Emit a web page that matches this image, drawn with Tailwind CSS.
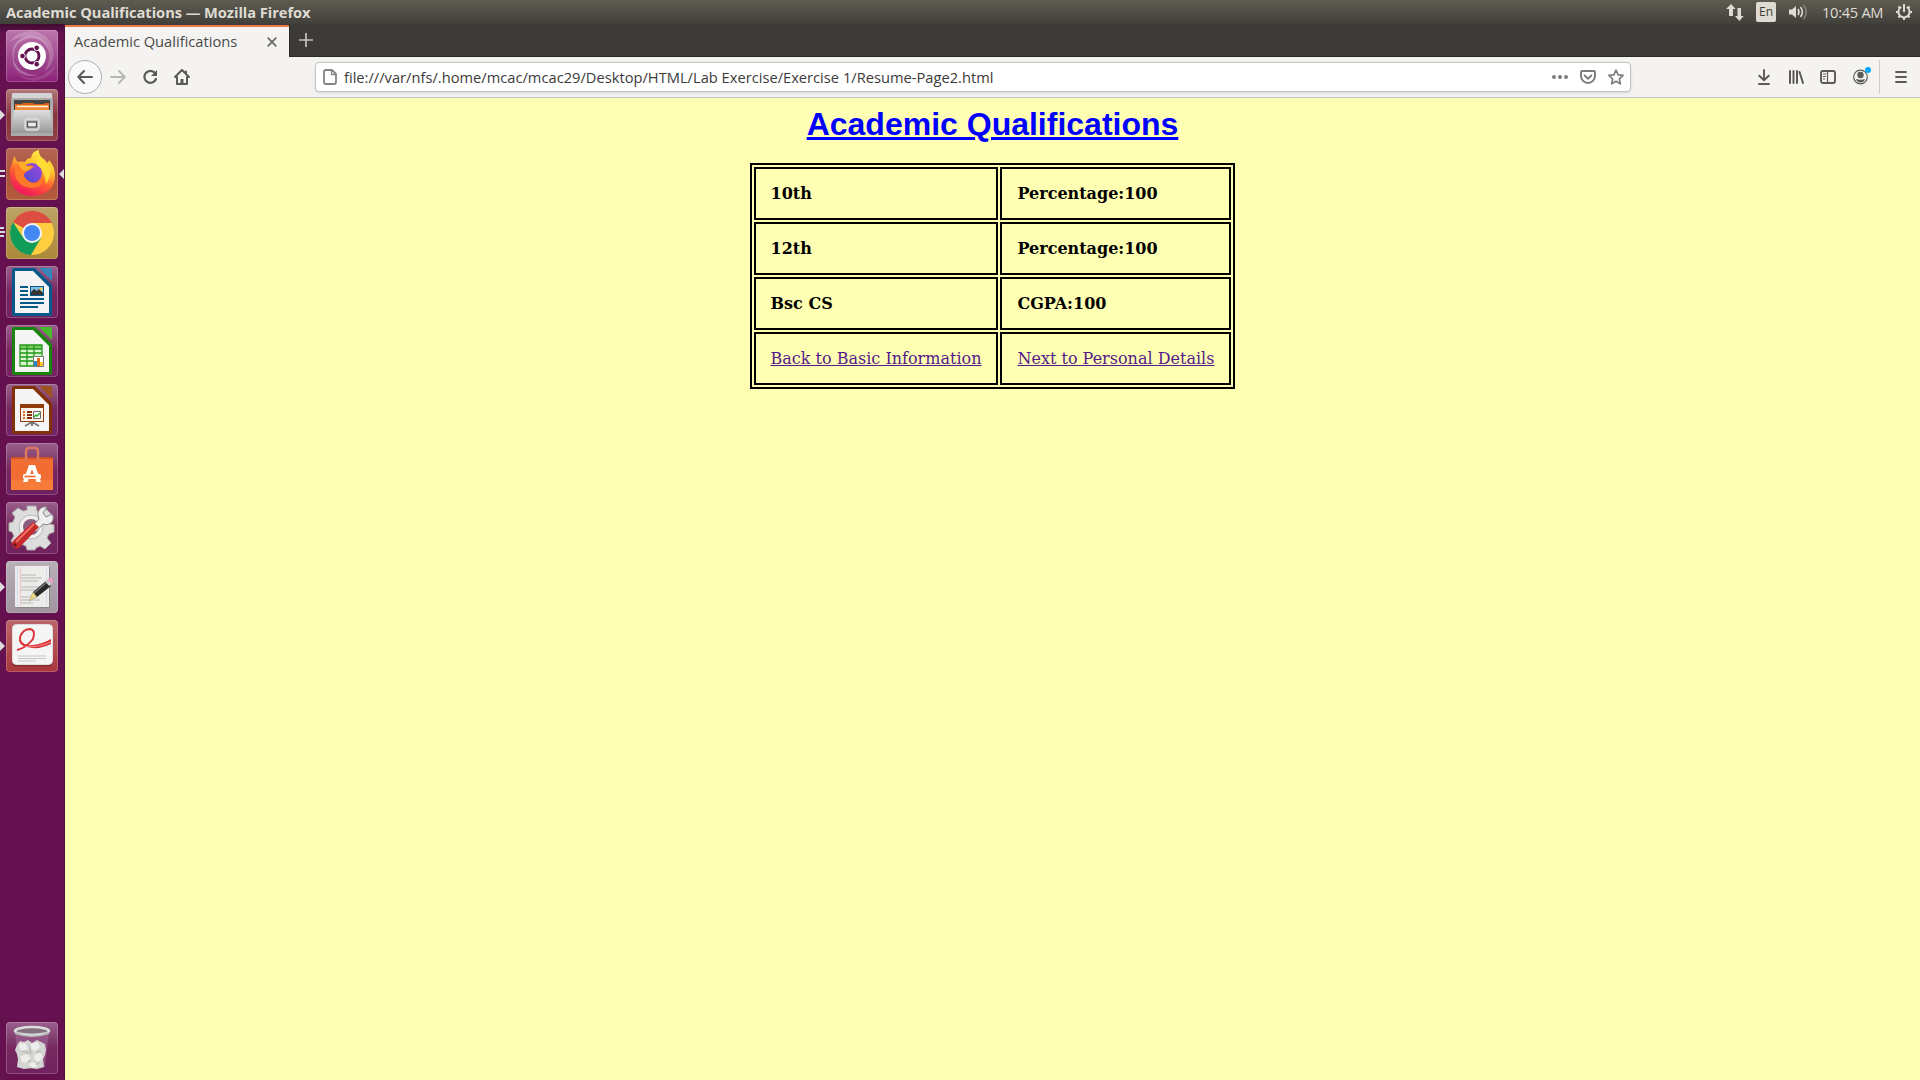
<!DOCTYPE html>
<html lang="en">
<head>
<meta charset="utf-8">
<title>Academic Qualifications</title>
<script src="https://cdn.jsdelivr.net/npm/@tailwindcss/browser@4"></script>
</head>
<body class="w-[1920px] h-[1080px] overflow-hidden flex flex-col bg-[#ffffb3] font-['Open_Sans','Noto_Sans',sans-serif]">

<!-- System panel -->
<header class="h-6 shrink-0 flex items-center justify-between pl-1.5 pr-[7px] bg-linear-to-b from-[#5e5b50] via-[#504e47] to-[#403f3a] text-[#dfdbd2]">
  <span class="text-[14.67px] leading-6 font-bold whitespace-nowrap pb-px tracking-[-0.05px]">Academic Qualifications — Mozilla Firefox</span>
  <div class="flex items-center h-6">
    <svg class="w-[18px] h-[18px] mr-3 mt-0.5" viewBox="0 0 18 18" fill="#dfdbd2"><path d="M5 0 9.600 5H7v7H3V5H0zM13.300 17 9 12h2.500V4h3.500v8h2.700z"/></svg>
    <span class="w-5 h-5 rounded-[2px] bg-[#dfdbd2] text-[#3c3b37] text-[12px] leading-5 text-center">En</span>
    <svg class="w-5 h-[18px] ml-3 mr-[14px]" viewBox="0 0 20 18" fill="none" stroke-width="1.600"><path d="M1 6.500h3L8 3v12l-4-3.500H1z" fill="#dfdbd2"/><path d="M10 6q2 3 0 6M12.500 4q3.700 5 0 10" stroke="#dfdbd2"/><path d="M15.500 2q5.500 7 0 14" stroke="#85827a"/></svg>
    <span class="w-[61px] text-[14.67px] leading-6 whitespace-nowrap pb-px tracking-[-0.3px]">10:45 AM</span>
    <svg class="w-[18px] h-[18px] ml-3" viewBox="0 0 18 18" fill="none" stroke="#dfdbd2"><path d="M6.200 4A5.600 5.600 0 1 0 11.800 4" stroke-width="2"/><path d="M9 1v8" stroke-width="2"/><path d="M3.500 3.500l1.800 1.800M14.500 3.500l-1.800 1.800M1 9h2.500M14.500 9H17M3.500 14.500l1.800-1.800M14.500 14.500l-1.800-1.800M9 14.500V17" stroke-width="2.200"/></svg>
  </div>
</header>

<div class="flex flex-1 min-h-0">
<!-- Launcher -->
<nav class="w-[65px] shrink-0 flex flex-col gap-[7px] pl-1.5 pt-1.5 pb-1.5 bg-[#65104f] border-r border-[#4b0b3b] bg-linear-to-b from-[#410b32] from-0% to-[#65104f] to-[10px]">
  <div class="relative size-[52px] rounded bg-linear-to-b from-[#ba76ac] to-[#8b1f78] ring-1 ring-inset ring-white/20">
    <svg viewBox="0 0 52 52" class="size-[52px]"><path d="M3 12Q27-1 39 14Q48 27 38 42Q50 33 47 19Q43 3 26 1Q12 1 3 12" fill="#fff" opacity=".2"/><path d="M8 31Q5 11 25 8Q37 8 43 20Q37 4 20 6Q2 12 8 36Q15 49 32 45Q14 45 8 31" fill="#fff" opacity=".28"/><path d="M9 40Q26 58 49 36Q45 49 28 51Q15 50 9 40" fill="#fff" opacity=".12"/><circle cx="26.200" cy="26.800" r="14" fill="#5f114d" opacity=".4"/><circle cx="26" cy="26" r="14" fill="#fff"/><circle cx="26" cy="26" r="7" fill="none" stroke="#63104f" stroke-width="2.800"/><g fill="#63104f" stroke="#fff"><circle cx="16.500" cy="26" r="2.800"/><circle cx="30.700" cy="17.800" r="2.800"/><circle cx="30.700" cy="34.200" r="2.800"/></g></svg>
  </div>
  <div class="relative size-[52px] rounded bg-linear-to-b from-[#b47a7b] via-[#873541] to-[#914147] ring-1 ring-inset ring-white/20">
    <svg viewBox="0 0 52 52" class="size-[52px]"><defs><linearGradient id="metal" x2="0" y2="1"><stop stop-color="#dedede"/><stop offset="1" stop-color="#999"/></linearGradient></defs><path d="M6 5q0-1 2-1h36q2 0 2 1l1 16H5z" fill="#d4d4d4"/><path d="M5 9h42v38H5z" fill="#aaa"/><path d="M8 11h36v12H8z" fill="#444"/><path d="M9 15h7l1-1h10l1 1h10l1-1h4v8H9z" fill="#d56218"/><path d="M9 16h34v5H9z" fill="#f18a38"/><path d="M11 17.500h31" stroke="#fff0d9" stroke-width="1.500"/><path d="M7 21h38l2 23H5z" fill="url(#metal)"/><path d="M5 19l3 2-3 20zM47 19l-3 2 3 20z" fill="#b7b7b7"/><rect x="19" y="30" width="14" height="11" rx="2" fill="#bcbcbc" stroke="#eee"/><rect x="21.500" y="33" width="9" height="5" fill="#eee" stroke="#555" stroke-width="1.300"/></svg>
    <i class="absolute -left-1.5 top-[21px] border-y-[5px] border-y-transparent border-l-[5px] border-l-[#ddd]"></i>
  </div>
  <div class="relative size-[52px] rounded bg-linear-to-b from-[#b46755] via-[#ad503a] to-[#b45b3c] ring-1 ring-inset ring-white/20">
    <svg viewBox="0 0 52 52" class="size-[52px]"><defs><linearGradient id="fox" x1=".8" y1="0" x2=".35" y2="1"><stop stop-color="#fff34f"/><stop offset=".35" stop-color="#ffc52c"/><stop offset=".65" stop-color="#ff5a32"/><stop offset="1" stop-color="#f0135f"/></linearGradient><linearGradient id="orb" x1="1" y1="0" x2="0" y2="1"><stop stop-color="#a045db"/><stop offset="1" stop-color="#4a4ed0"/></linearGradient></defs><path d="M9 8Q9 12 12 14Q16 13 19 14Q21 10 25 10Q26 3 33 2Q32 8 39 12L41 15Q43 14 43 12Q49 19 49 27Q49 46 27 48Q5 47 4 27Q3 20 6 16Q6 12 9 8" fill="url(#fox)"/><circle cx="26" cy="25" r="10" fill="url(#orb)"/><path d="M9 17Q16 13 21 18Q26 16 28 19L22 23Q18 24 18 28Q20 33 27 35Q34 36 38 29Q37 40 26 40Q12 39 9 27z" fill="#ff7a28"/><path d="M12 14q5-1 8 4l6 1q-3 4-8 4-5-4-6-9" fill="#ffae2a"/><path d="M33 2q-1 6 6 11 10 10 1 23-1-14-9-19-2-7 2-15" fill="#ffdb36"/></svg>
    <i class="absolute -left-1.5 top-[22px] w-[5px] h-[7px] border-y-2 border-[#ddd]"></i>
    <i class="absolute left-[53px] top-[21px] border-y-[5px] border-y-transparent border-r-[5px] border-r-[#ddd]"></i>
  </div>
  <div class="relative size-[52px] rounded bg-linear-to-b from-[#bda366] to-[#ac8938] ring-1 ring-inset ring-white/20">
    <svg viewBox="0 0 52 52" class="size-[52px]"><circle cx="26" cy="26" r="22" fill="#ffcd40"/><path d="M26 26 7 15A22 22 0 0 1 46 16H26z" fill="#dc4d42"/><path d="M7 15A22 22 0 0 0 25 48L35 31 26 26 16 29z" fill="#119d59"/><circle cx="26" cy="26" r="10" fill="#f4f4f4"/><circle cx="26" cy="26" r="8" fill="#4387f5"/></svg>
    <i class="absolute -left-1.5 top-5 w-1 h-0.5 bg-[#ddd]"></i><i class="absolute -left-1.5 top-6 w-[5px] h-0.5 bg-[#ddd]"></i><i class="absolute -left-1.5 top-7 w-1 h-0.5 bg-[#ddd]"></i>
  </div>
  <div class="size-[52px] rounded bg-linear-to-b from-[#99608b] via-[#76285f] to-[#702260] ring-1 ring-inset ring-white/20">
    <svg viewBox="0 0 52 52" class="size-[52px]"><path d="M6 4q0-2 2-2h21l17 17v29q0 2-2 2H8q-2 0-2-2z" fill="#07588b"/><path d="M33 2h11q2 0 2 2v11z" fill="#3886b9"/><path d="M9 5h18l16 16v26H9z" fill="#f4f4f4"/><path d="M14 21h8M14 25h8M14 29h8M14 33h24M14 37h24M14 41h18" stroke="#07588b" stroke-width="2"/><path d="M24 20h14v10H24z" fill="#07588b"/><path d="M25 21h12v8H25z" fill="#82bde3"/><path d="M25 29v-3l3-3 3 2 2-2 4 4v2z" fill="#333"/><circle cx="35" cy="23" r="1.500" fill="#ffcf41"/></svg>
  </div>
  <div class="size-[52px] rounded bg-linear-to-b from-[#99608b] via-[#76285f] to-[#702260] ring-1 ring-inset ring-white/20">
    <svg viewBox="0 0 52 52" class="size-[52px]"><path d="M6 4q0-2 2-2h21l17 17v29q0 2-2 2H8q-2 0-2-2z" fill="#18840d"/><path d="M33 2h11q2 0 2 2v11z" fill="#48b92e"/><path d="M9 5h18l16 16v26H9z" fill="#f5f5f5"/><path d="M14 20h22v21H14z" fill="#d8f6d0"/><path d="M14 20h22v4H14z" fill="#76cb5d"/><path d="M14 20h22v21H14zM14 24h22M14 28h22M14 32h22M14 36h22M21 20v21M28 20v21" fill="none" stroke="#239619" stroke-width="1.300"/><path d="M27.500 31.500h10v10h-10z" fill="#fff" stroke="#777"/><path d="M28 36h3v5h-3z" fill="#238ccd"/><path d="M31 33h3v8h-3z" fill="#e36913"/><path d="M34 37h3v4h-3z" fill="#ffc52b"/></svg>
  </div>
  <div class="size-[52px] rounded bg-linear-to-b from-[#99608b] via-[#76285f] to-[#702260] ring-1 ring-inset ring-white/20">
    <svg viewBox="0 0 52 52" class="size-[52px]"><path d="M6 4q0-2 2-2h21l17 17v29q0 2-2 2H8q-2 0-2-2z" fill="#823006"/><path d="M33 2h11q2 0 2 2v11z" fill="#9c5221"/><path d="M9 5h18l16 16v26H9z" fill="#f5f5f5"/><path d="M26 38 19 42M26 38l7 4M26 37v5" stroke="#777" stroke-width="2"/><rect x="14.500" y="20.500" width="23" height="17" fill="#fff4ea" stroke="#943b0b"/><path d="M14 20h24v4H14z" fill="#943b0b"/><path d="M17 28h2m-2 3h2m-2 3h2" stroke="#e36b28" stroke-width="2"/><path d="M21 28h5m-5 3h5m-5 3h5" stroke="#823006" stroke-width="2"/><path d="M27.500 27.500h7v7h-7z" fill="#fff" stroke="#666"/><path d="m28 33 2-2 1 1 3-3" fill="none" stroke="#27ae32" stroke-width="1.500"/></svg>
  </div>
  <div class="size-[52px] rounded bg-linear-to-b from-[#99608b] via-[#76285f] to-[#702260] ring-1 ring-inset ring-white/20">
    <svg viewBox="0 0 52 52" class="size-[52px]"><path d="M5 14h42v33H5z" fill="#f26d32"/><path d="M5 37h42v10H5z" fill="#f77b39"/><path d="M5 14h42v2H5z" fill="#cf5428"/><path d="M20 18V9q0-4 3-4h6q3 0 3 4v9" fill="none" stroke="#d9785d" stroke-width="2.500"/><path fill-rule="evenodd" d="m23 22-6 17h4.500l4.500-13 4.500 13H35l-6-17z" fill="#fff"/><rect x="17" y="31" width="18" height="5" rx="1.500" fill="#fff"/><path d="M18.500 33.500h11" stroke="#f26d32" stroke-width="1.800"/></svg>
  </div>
  <div class="size-[52px] rounded bg-linear-to-b from-[#99608b] via-[#76285f] to-[#702260] ring-1 ring-inset ring-white/20">
    <svg viewBox="0 0 52 52" class="size-[52px]"><path d="m21 4 9 0 1 5 4 2 5-4 6 6-4 5 2 4 4 1v7l-5 2-2 4 4 5-6 6-5-3-4 2-1 2h-8l-1-4-5-2-5 3-5-6 3-5-2-4-3-1v-8l4-1 2-5-3-4 6-5 5 3 4-1z" fill="#ddd" stroke="#aaa"/><circle cx="25" cy="25" r="12" fill="#efefef" stroke="#b6b6b6"/><circle cx="25" cy="25" r="8" fill="#8c5c7e"/><path d="m26 25 7-8q-3-7 2-11 3-2 6-1l-4 6 3 4 6-3q3 5-1 9-4 3-8 1l-7 8z" fill="#eee" stroke="#888"/><path d="m27 20 6 5-20 21q-5 2-7-3-1-2 2-5z" fill="#c52b2b"/><path d="M28 22 10 40" stroke="#ed7066" stroke-width="2"/><circle cx="9" cy="43" r="1.800" fill="#6c1822"/></svg>
  </div>
  <div class="relative size-[52px] rounded bg-linear-to-b from-[#b9afb7] to-[#a094a0] ring-1 ring-inset ring-white/20">
    <svg viewBox="0 0 52 52" class="size-[52px]"><path d="M9 6h35v41H9z" fill="#888"/><path d="M9 5h34v41H9z" fill="#ececea"/><path d="M15 14h15M15 17h21M15 20h17M15 26h19M15 29h17M15 36h16M15 39h19M15 42h12" stroke="#b5b5b5" stroke-width="1.200"/><path d="M14.500 6v39" stroke="#f3c4c4"/><path d="M11.500 6v39M40.500 6v39" stroke="#d3deea"/><path d="m27 31 13-11 5 5-14 11-8 4z" fill="#292929"/><path d="m27 31 4 5-8 4z" fill="#e8d984"/><path d="m28 32 13-11" stroke="#777" stroke-width="1.500"/><path d="m39 20 3-2 4 5-3 2z" fill="#ccc"/><path d="m41.500 18.500q2-3 4.500-1t0 5z" fill="#e9a0c6"/></svg>
    <i class="absolute -left-1.5 top-[21px] border-y-[5px] border-y-transparent border-l-[5px] border-l-[#ddd]"></i>
  </div>
  <div class="relative size-[52px] rounded bg-linear-to-b from-[#ba6569] to-[#a9353b] ring-1 ring-inset ring-white/20">
    <svg viewBox="0 0 52 52" class="size-[52px]"><rect x="6.500" y="5.500" width="40" height="41" rx="4" fill="#6d2028" opacity=".6"/><rect x="6.500" y="4.500" width="40" height="40" rx="4" fill="#f5f5f5" stroke="#ddd"/><path d="M11 30Q20 28 27 19Q30 10 24 9Q17 9 14 17Q13 25 21 26" fill="none" stroke="#db353a" stroke-width="2"/><path d="M15 21Q18 26 27 25Q36 24 45 19V24Q35 29 26 28Q18 27 15 21" fill="#da3438"/><path d="M19 26.500Q31 28 45 22" fill="none" stroke="#f28d8d"/><path d="M12 36h28M12 38.500h28M12 41h18" stroke="#c5c5c5" stroke-width="1.200"/></svg>
    <i class="absolute -left-1.5 top-[21px] border-y-[5px] border-y-transparent border-l-[5px] border-l-[#ddd]"></i>
  </div>
  <div class="mt-auto size-[52px] rounded bg-linear-to-b from-[#97608b] via-[#76285f] to-[#702260] ring-1 ring-inset ring-white/20">
    <svg viewBox="0 0 52 52" class="size-[52px]"><path d="M9 10h34l-4 35q-13 4-26 0z" fill="#a875a1" opacity=".45"/><path d="m11 23 3-4 4 1 4-2 4 3 5-3 4 2 4 2 1 6-1 5-2 4 1 8-7 2-6-1-7 1-7-2 1-8-1-5-2-4z" fill="#d4d4d2"/><g fill="#ededeb"><path d="m14 21 6 1 2 5-6 2-3-4zM25 22l6-2 3 5-5 4-5-3zM15 34l6-2 4 4-5 5-5-2zM29 32l6-1 2 5-5 4-4-3zM22 42l5-2 5 4-5 2z"/></g><path d="m16 29 6 2 3-3M30 30l5-1M21 41l4-3M30 43l4-3M24 24l1 8" fill="none" stroke="#b2b2b0"/><ellipse cx="26" cy="9" rx="17" ry="4" fill="#857280" stroke="#ddd" stroke-width="2.500"/><path d="M9 10q17 7 34 0v2q-17 6-34 0z" fill="#b9b9b9"/></svg>
  </div>
</nav>

<div class="flex-1 flex flex-col min-w-0">
  <!-- Tab strip -->
  <div class="h-[33px] flex bg-[#3c3b37] border-b border-[#2b2a27] shrink-0">
    <div class="w-[224px] h-[33px] bg-[#f4f3f1] border-t border-t-[#3c3b37] flex flex-col">
      <div class="h-0.5 bg-[#ef7847]"></div>
      <div class="flex flex-1 items-center pl-[9px] pr-3 text-[#4a4a48]">
        <span class="flex-1 text-[14.67px] leading-5 pb-[3px] whitespace-nowrap">Academic Qualifications</span>
        <svg class="size-[10px] mb-px" viewBox="0 0 10 10" stroke="#6a6967" stroke-width="1.700"><path d="m.7.7 8.600 8.600m0-8.600L.7 9.300"/></svg>
      </div>
    </div>
    <div class="w-px bg-[#2b2a27]"></div>
    <svg class="size-[14px] ml-[9px] mt-[9px]" viewBox="0 0 14 14" stroke="#c5c3bc" stroke-width="1.700"><path d="M7 0v14M0 7h14"/></svg>
  </div>

  <!-- Navigation toolbar -->
  <div class="h-[41px] shrink-0 flex items-center bg-[#f4f3f1] border-b border-[#c5c2c0] pl-[3px] pr-[13px]">
    <div class="size-[34px] rounded-full border border-[#b1b0ae] bg-[#fafafa] flex items-center justify-center">
      <svg class="size-4" viewBox="0 0 16 16" fill="none" stroke="#5b5a58" stroke-width="2" stroke-linecap="round" stroke-linejoin="round"><path d="M15 8H1.500M7 2 1.300 8 7 14"/></svg>
    </div>
    <svg class="size-4 ml-2" viewBox="0 0 16 16" fill="none" stroke="#b9b8b6" stroke-width="2" stroke-linecap="round" stroke-linejoin="round"><path d="M1 8h13.500M9 2l5.700 6L9 14"/></svg>
    <svg class="size-4 ml-4" viewBox="0 0 16 16" fill="none" stroke="#5b5a58" stroke-width="2.200" stroke-linecap="round"><path d="M13 4A6 6 0 1 0 14 10"/><path d="M15 1v6H9z" fill="#5b5a58" stroke="none"/></svg>
    <svg class="size-4 ml-4" viewBox="0 0 16 16" fill="none" stroke="#5b5a58" stroke-width="2" stroke-linecap="round" stroke-linejoin="round"><path d="m1 8 7-7 7 7M3 8v7h10V8M12 2.500V5"/><path d="M6.500 15v-5h3v5z" fill="#5b5a58" stroke="none"/></svg>
    <div class="w-[1316px] h-[30px] ml-[125px] flex items-center rounded bg-white border border-[#c6c4c2] shadow-sm pl-[7px] pr-1.5">
      <svg class="w-[14px] h-4" viewBox="0 0 14 16" fill="none" stroke="#858482" stroke-width="1.800" stroke-linejoin="round"><path d="M3 1h6l4 4v8q0 2-2 2H3q-2 0-2-2V3q0-2 2-2z"/><path d="M8.500 1v4.500H13" stroke-width="1.300"/></svg>
      <span class="ml-[7px] flex-1 text-[14.67px] leading-5 whitespace-nowrap text-[#3c3b3a] tracking-[0.01px]">file:///var/nfs/.home/mcac/mcac29/Desktop/HTML/Lab Exercise/Exercise 1/Resume-Page2.html</span>
      <svg class="size-4" viewBox="0 0 16 16" fill="#7c7b79"><circle cx="2" cy="8" r="2"/><circle cx="8" cy="8" r="2"/><circle cx="14" cy="8" r="2"/></svg>
      <svg class="size-4 ml-3" viewBox="0 0 16 16" fill="none" stroke="#7c7b79" stroke-width="1.900" stroke-linecap="round" stroke-linejoin="round"><path d="M2 2h12q1 0 1 1v4a7 7 0 0 1-14 0V3q0-1 1-1zM4.700 6.500 8 9.700l3.300-3.200"/></svg>
      <svg class="size-4 ml-3" viewBox="0 0 16 16" fill="none" stroke="#7c7b79" stroke-width="1.700" stroke-linejoin="round"><path d="m8 1.200 2.100 4.600 5 .6-3.700 3.400 1 5L8 12.300l-4.400 2.500 1-5L.9 6.400l5-.6z"/></svg>
    </div>
    <div class="flex items-center ml-auto">
      <svg class="w-3 h-4" viewBox="0 0 12 16" fill="none" stroke="#5b5a58" stroke-width="1.900" stroke-linecap="round" stroke-linejoin="round"><path d="M6 1v10M1.300 6.700 6 11.300l4.700-4.600M1 15h10"/></svg>
      <svg class="size-4 ml-[18px]" viewBox="0 0 16 16" fill="none" stroke="#5b5a58" stroke-width="2" stroke-linecap="round"><path d="M2 2v12M5.500 2v12M9 2v12M11.500 3l3.500 11"/></svg>
      <svg class="size-4 ml-4" viewBox="0 0 16 16" fill="none" stroke="#5b5a58" stroke-width="1.900"><rect x="1" y="2" width="14" height="12" rx="2"/><path d="M7.500 2v12" stroke-width="1.200"/><path d="M3 5h3M3 7.500h3M3 10h2" stroke-width="1.100"/></svg>
      <div class="relative size-4 ml-[17px] mr-[10px]">
        <svg class="size-4" viewBox="0 0 16 16"><circle cx="7.500" cy="8" r="6.800" fill="none" stroke="#5b5a58" stroke-width="1.200"/><circle cx="7.500" cy="6" r="3.200" fill="#5b5a58"/><path d="M3 10q4.500 1.500 9 0-1 3.500-4.500 3.500T3 10" fill="#5b5a58"/></svg>
        <i class="absolute size-1.5 rounded-full bg-[#00a8f7] left-3 -top-0.5"></i>
      </div>
      <div class="w-px h-[34px] bg-[#cfccca] mr-[15px]"></div>
      <svg class="w-3 h-4" viewBox="0 0 12 16" stroke="#5b5a58" stroke-width="1.800" stroke-linecap="round"><path d="M1 3h10M1 8h10M1 13h10"/></svg>
    </div>
  </div>

  <!-- Page -->
  <main class="flex-1 bg-[#ffffb3] pt-2 flex flex-col items-center font-['DejaVu_Serif',serif] text-base text-black">
    <h1 class="font-['Liberation_Sans',sans-serif] text-[32px] leading-[37px] font-bold text-[#0000ff] underline mb-5">Academic Qualifications</h1>
    <table class="border-2 border-black border-separate border-spacing-[2px] leading-[19px]">
      <tr><td class="border-2 border-black p-[15px] w-[244px] font-bold">10th</td><td class="border-2 border-black p-[15px] w-[231px] font-bold">Percentage:100</td></tr>
      <tr><td class="border-2 border-black p-[15px] font-bold">12th</td><td class="border-2 border-black p-[15px] font-bold">Percentage:100</td></tr>
      <tr><td class="border-2 border-black p-[15px] font-bold">Bsc CS</td><td class="border-2 border-black p-[15px] font-bold">CGPA:100</td></tr>
      <tr><td class="border-2 border-black p-[15px] whitespace-nowrap"><a class="text-[#551a8b] underline">Back to Basic Information</a></td><td class="border-2 border-black p-[15px] whitespace-nowrap"><a class="text-[#551a8b] underline">Next to Personal Details</a></td></tr>
    </table>
  </main>
</div>
</div>
</body>
</html>
